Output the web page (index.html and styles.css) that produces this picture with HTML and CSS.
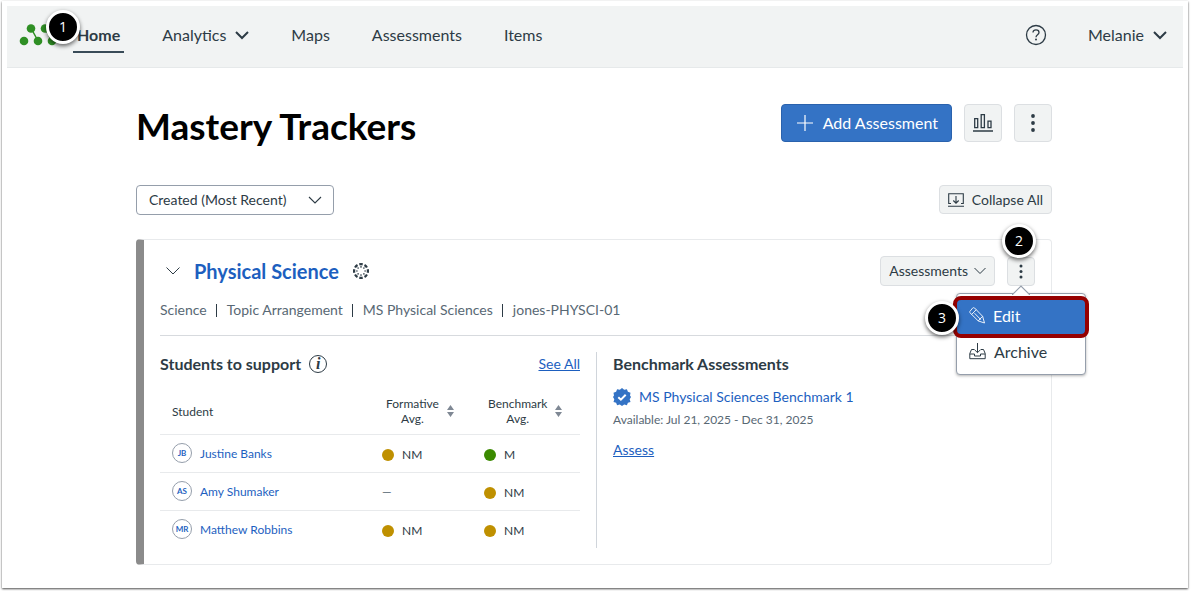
FILE: index.html
```html
<!DOCTYPE html>
<html lang="en">
<head>
    <meta charset="UTF-8">
    <meta name="viewport" content="width=device-width, initial-scale=1.0">
    <title>Mastery Trackers</title>
    <link rel="stylesheet" href="styles.css">
</head>
<body>

<div class="frame">
    <header class="topbar">
        <a href="#" class="brand" aria-label="Mastery">
            <svg width="52" height="24" viewBox="0 0 52 24">
                <path d="M12 5l7 13M26 5l7 13" stroke="#2f8f24" stroke-width="1.5" fill="none"/>
                <g fill="#2f8f24">
                    <circle cx="5" cy="18" r="4.300"/>
                    <circle cx="12" cy="5.500" r="4.300"/>
                    <circle cx="19" cy="18" r="4.300"/>
                    <circle cx="26" cy="5.500" r="4.300"/>
                    <circle cx="33" cy="18" r="4.300"/>
                </g>
            </svg>
            <span class="step step-home">1</span>
        </a>
        <nav class="nav">
            <a href="#" class="active">Home</a>
            <a href="#">Analytics
                <svg width="14" height="9" viewBox="0 0 14 9"><path d="M1 1l6 6 6-6" fill="none" stroke="currentColor" stroke-width="2"/></svg>
            </a>
            <a href="#">Maps</a>
            <a href="#">Assessments</a>
            <a href="#">Items</a>
        </nav>
        <div class="account">
            <button type="button" class="plain" aria-label="Help">
                <svg width="22" height="22" viewBox="0 0 22 22" fill="none" stroke="currentColor">
                    <circle cx="11" cy="11" r="9.500" stroke-width="1.300"/>
                    <path d="M8 8.600C8 6.900 9.300 5.800 11 5.800s3 1.100 3 2.600c0 2.300-3 2.300-3 4.800" stroke-width="1.300"/>
                    <circle cx="11" cy="15.600" r="1" fill="currentColor" stroke="none"/>
                </svg>
            </button>
            <button type="button" class="plain user">Melanie
                <svg width="14" height="9" viewBox="0 0 14 9"><path d="M1 1l6 6 6-6" fill="none" stroke="currentColor" stroke-width="2"/></svg>
            </button>
        </div>
    </header>

    <main class="content">
        <div class="row page-head">
            <h1>Mastery Trackers</h1>
            <div class="actions">
                <button type="button" class="btn btn-primary">
                    <svg width="16" height="16" viewBox="0 0 16 16"><path d="M8 0v16M0 8h16" stroke="currentColor" stroke-width="1.200"/></svg>
                    Add Assessment
                </button>
                <button type="button" class="btn btn-square" aria-label="Reports">
                    <svg width="20" height="20" viewBox="0 0 20 20" fill="none" stroke="currentColor">
                        <path d="M1.700 5.700h3v9h-3zM8.200 1.700h3.200v13H8.200zM15 8.200h3v6.500h-3z" stroke-width="1.300"/>
                        <path d="M0 18h20" stroke-width="1.500"/>
                    </svg>
                </button>
                <button type="button" class="btn btn-square" aria-label="More options">
                    <svg width="4" height="18" viewBox="0 0 4 18" fill="currentColor"><circle cx="2" cy="2" r="1.900"/><circle cx="2" cy="9" r="1.900"/><circle cx="2" cy="16" r="1.900"/></svg>
                </button>
            </div>
        </div>

        <div class="row filters">
            <div class="sort-select">
                <select id="sortBy" aria-label="Sort by">
                    <option>Created (Most Recent)</option>
                </select>
                <svg width="14" height="8" viewBox="0 0 14 8"><path d="M1 1l6 6 6-6" fill="none" stroke="currentColor" stroke-width="1.100"/></svg>
            </div>
            <button type="button" class="btn">
                <svg width="16" height="14" viewBox="0 0 16 14" fill="none" stroke="currentColor" stroke-width="1.100">
                    <path d="M3 10.500H.7V.7h14.600v9.800H13M0 13.300h16M8 3v7M5.300 7.500L8 10.200l2.700-2.700"/>
                </svg>
                Collapse All
            </button>
        </div>

        <section class="card">
            <div class="row card-head">
                <button type="button" class="plain toggle" aria-label="Collapse">
                    <svg width="14" height="8" viewBox="0 0 14 8"><path d="M.5.500l6.500 6.500L13.500.500" fill="none" stroke="currentColor" stroke-width="1"/></svg>
                </button>
                <h2><a href="#">Physical Science</a></h2>
                <svg class="canvas-icon" width="16" height="16" viewBox="0 0 16 16" fill="none" stroke="currentColor">
                    <circle cx="8" cy="8" r="6.900" stroke-width="2.200" pathLength="80" stroke-dasharray="6.500 3.500" stroke-dashoffset="3.250"/>
                    <g fill="currentColor" stroke="none">
                        <circle cx="8" cy="3.900" r=".8"/><circle cx="10.900" cy="5.100" r=".8"/><circle cx="12.100" cy="8" r=".8"/><circle cx="10.900" cy="10.900" r=".8"/>
                        <circle cx="8" cy="12.100" r=".8"/><circle cx="5.100" cy="10.900" r=".8"/><circle cx="3.900" cy="8" r=".8"/><circle cx="5.100" cy="5.100" r=".8"/>
                    </g>
                </svg>
                <div class="card-actions">
                    <button type="button" class="btn btn-drop">Assessments
                        <svg width="12" height="8" viewBox="0 0 12 8"><path d="M.5 1L6 6.500 11.500 1" fill="none" stroke="currentColor" stroke-width="1"/></svg>
                    </button>
                    <div class="more">
                        <button type="button" class="btn btn-more" aria-label="Tracker options">
                            <svg width="4" height="15" viewBox="0 0 4 15" fill="currentColor"><circle cx="2" cy="2" r="1.500"/><circle cx="2" cy="7.500" r="1.500"/><circle cx="2" cy="13" r="1.500"/></svg>
                        </button>
                        <span class="step step-more">2</span>
                        <div class="menu">
                            <svg class="menu-arrow" width="18" height="10" viewBox="0 0 18 10"><path d="M0 10L9 1l9 9" fill="#fff" stroke="#959eab" stroke-width="1.200"/></svg>
                            <button type="button" class="selected">
                                <svg width="16" height="17" viewBox="0 0 16 17" fill="none" stroke="currentColor" stroke-width=".9">
                                    <path d="M1 4.300L3.600 1.100c.6-.6 1.300-.6 2-.1l8 8.300 1.900 6.700-6.300-2.100L1 5.800c-.5-.5-.5-1 0-1.500zM2.600 7.500l4.600-4.800M9.200 13.900l4.400-4.600M5.500 6.200l6.300 6.500"/>
                                </svg>
                                Edit
                            </button>
                            <button type="button">
                                <svg width="17" height="17" viewBox="0 0 17 17" fill="none" stroke="currentColor" stroke-width="1">
                                    <path d="M5 6.500H2.500L.8 10.500v5.200h15.400v-5.200L14.500 6.500H12M.8 11h4.700v2h6v-2h4.700M8.500 0v9.500M5.300 6.500l3.200 3.200 3.200-3.200"/>
                                </svg>
                                Archive
                            </button>
                            <span class="callout"></span>
                            <span class="step step-edit">3</span>
                        </div>
                    </div>
                </div>
            </div>

            <ul class="meta">
                <li>Science</li>
                <li>Topic Arrangement</li>
                <li>MS Physical Sciences</li>
                <li>jones-PHYSCI-01</li>
            </ul>

            <div class="columns">
                <section class="students">
                    <div class="section-head">
                        <h3>Students to support</h3>
                        <button type="button" class="plain info" aria-label="About students to support">i</button>
                        <a href="#" class="underlined">See All</a>
                    </div>
                    <table>
                        <thead>
                            <tr>
                                <th class="col-student">Student</th>
                                <th class="col-formative">
                                    <button type="button" class="plain sort"><span>Formative<br>Avg.</span>
                                        <svg width="7" height="12" viewBox="0 0 7 12" fill="#7f8894"><path d="M0 5l3.500-5L7 5zM0 7l3.500 5L7 7z"/></svg>
                                    </button>
                                </th>
                                <th>
                                    <button type="button" class="plain sort"><span>Benchmark<br>Avg.</span>
                                        <svg width="7" height="12" viewBox="0 0 7 12" fill="#7f8894"><path d="M0 5l3.500-5L7 5zM0 7l3.500 5L7 7z"/></svg>
                                    </button>
                                </th>
                            </tr>
                        </thead>
                        <tbody>
                            <tr>
                                <td><a href="#" class="student"><span class="avatar">JB</span>Justine Banks</a></td>
                                <td><span class="score near">NM</span></td>
                                <td><span class="score mastered">M</span></td>
                            </tr>
                            <tr>
                                <td><a href="#" class="student"><span class="avatar">AS</span>Amy Shumaker</a></td>
                                <td><span class="no-score">—</span></td>
                                <td><span class="score near">NM</span></td>
                            </tr>
                            <tr>
                                <td><a href="#" class="student"><span class="avatar">MR</span>Matthew Robbins</a></td>
                                <td><span class="score near">NM</span></td>
                                <td><span class="score near">NM</span></td>
                            </tr>
                        </tbody>
                    </table>
                </section>

                <section class="benchmarks">
                    <h3>Benchmark Assessments</h3>
                    <a href="#" class="benchmark">
                        <svg width="18" height="18" viewBox="0 0 18 18">
                            <path d="M9 0l2.200 1.700 2.700-.5 1 2.600 2.600 1-.5 2.600L18 9l-1.300 2.200.8 2.700-2.600.8-1 2.600-2.700-.8L9 18l-2.200-1.500-2.700.8-1-2.600-2.600-.8.8-2.700L0 9l1-1.600-.5-2.600 2.600-1 1-2.600 2.700.5z" fill="#3473c5"/>
                            <path d="M5.300 9.200l2.600 2.500 4.800-5" fill="none" stroke="#fff" stroke-width="2"/>
                        </svg>
                        MS Physical Sciences Benchmark 1
                    </a>
                    <p>Available: Jul 21, 2025 - Dec 31, 2025</p>
                    <a href="#" class="underlined">Assess</a>
                </section>
            </div>
        </section>
    </main>
</div>

</body>
</html>
```
FILE: styles.css
```css
* {
    box-sizing: border-box;
}

body {
    font-family: Lato, 'Liberation Sans', sans-serif;
    font-size: 14px;
    line-height: 20px;
    margin: 0;
    padding: 1px 3px 3px 2px;
    min-height: 100vh;
    display: flex;
    background-color: #fff;
    color: #2d3b45;
}

h1, h2, h3, p, ul {
    margin: 0;
    padding: 0;
}

svg {
    flex: none;
    display: block;
}

a {
    color: #1d5fbf;
    text-decoration: none;
}

button, select {
    font: inherit;
    color: inherit;
}

button {
    cursor: pointer;
}

.frame {
    flex: 1;
    padding: 5px;
    background-color: #fff;
    box-shadow: 0 1px 2px rgba(0, 0, 0, 0.7);
}

/* Top navigation */
.topbar {
    display: flex;
    align-items: center;
    height: 62px;
    padding: 0 16px 3px 12px;
    background-color: #f1f3f3;
    border-bottom: 1px solid #e6e9ea;
    font-size: 16px;
}

.brand {
    position: relative;
    width: 54px;
}

.nav {
    display: flex;
    gap: 34px;
}

.nav a {
    display: flex;
    align-items: center;
    gap: 9px;
    padding: 6px 4px;
    color: #2d3b45;
    border-bottom: 2px solid transparent;
    border-top: 2px solid transparent;
}

.nav .active {
    font-weight: bold;
    border-bottom-color: #394b58;
}

.account {
    display: flex;
    align-items: center;
    gap: 41px;
    margin-left: auto;
}

.plain {
    display: flex;
    align-items: center;
    padding: 0;
    border: none;
    background: none;
}

.user {
    gap: 9px;
}

/* Page heading and filters */
.content {
    padding: 36px 131px 12px 129px;
}

.row {
    display: flex;
    align-items: center;
    justify-content: space-between;
}

h1 {
    padding-top: 6px;
    font-size: 37px;
    line-height: 40px;
    color: #000;
}

.page-head {
    height: 38px;
    margin-bottom: 43px;
}

.actions {
    display: flex;
    gap: 12px;
}

.btn {
    display: flex;
    align-items: center;
    justify-content: center;
    gap: 8px;
    height: 29px;
    padding: 0 8px;
    background-color: #f1f3f3;
    border: 1px solid #dcdfe2;
    border-radius: 4px;
}

.btn-primary {
    height: 38px;
    gap: 10px;
    padding: 0 13px 0 15px;
    background-color: #3473c5;
    border-color: #2a62ad;
    color: #fff;
    font-size: 16px;
}

.btn-square {
    width: 38px;
    height: 38px;
}

.filters {
    align-items: flex-start;
    margin-bottom: 24px;
}

.sort-select {
    display: grid;
    width: 198px;
    align-items: center;
}

.sort-select select, .sort-select svg {
    grid-area: 1 / 1;
}

.sort-select select {
    height: 30px;
    padding: 0 12px;
    appearance: none;
    background-color: #fff;
    border: 1px solid #959eab;
    border-radius: 4px;
}

.sort-select svg {
    justify-self: end;
    margin-right: 12px;
    pointer-events: none;
}

/* Tracker card */
.card {
    padding: 15px 16px 16px;
    border: 1px solid #e8eaec;
    border-left: 8px solid #8b8b8b;
    border-radius: 4px;
}

.card-head {
    height: 32px;
    margin-bottom: 13px;
}

.toggle {
    padding: 6px;
}

h2 {
    margin: 0 14px 0 8px;
    font-size: 20px;
}

.card-actions {
    display: flex;
    align-items: center;
    gap: 12px;
    margin-left: auto;
}

.btn-drop {
    height: 30px;
    gap: 6px;
}

.more {
    position: relative;
}

.btn-more {
    width: 28px;
}

.meta {
    display: flex;
    list-style: none;
    padding-bottom: 15px;
    margin-bottom: 16px;
    border-bottom: 1px solid #d7dade;
    color: #586874;
}

.meta li {
    display: flex;
    align-items: center;
}

.meta li + li::before {
    content: "";
    width: 1px;
    height: 13px;
    margin: 0 10px 0 9px;
    background-color: #2d3b45;
}

/* Options menu */
.menu {
    position: absolute;
    top: 36px;
    left: 50%;
    width: 130px;
    margin-left: -65px;
    padding: 4px 0;
    background-color: #fff;
    border: 1px solid #959eab;
    border-radius: 4px;
    box-shadow: 0 1px 3px rgba(0, 0, 0, 0.3);
}

.menu button {
    display: flex;
    align-items: center;
    gap: 8px;
    width: 100%;
    height: 36px;
    padding: 0 12px;
    border: none;
    background: none;
    font-size: 16px;
}

.menu .selected {
    background-color: #3473c5;
    color: #fff;
}

.menu-arrow {
    position: absolute;
    top: -9px;
    left: 55px;
}

.callout {
    position: absolute;
    top: 2px;
    left: -4px;
    right: -4px;
    height: 42px;
    border: 4px solid #960000;
    border-radius: 8px;
}

/* Numbered step markers */
.step {
    position: absolute;
    width: 34px;
    height: 34px;
    border: 3px solid #fff;
    border-radius: 50%;
    background-color: #000;
    box-shadow: 0 2px 4px rgba(0, 0, 0, 0.6);
    color: #fff;
    font-family: 'Open Sans', sans-serif;
    font-size: 14px;
    font-weight: normal;
    line-height: 27px;
    text-align: center;
}

.step-home {
    top: -13px;
    left: 27px;
}

.step-more {
    top: -33px;
    left: -5px;
}

.step-edit {
    top: 7px;
    left: -32px;
}

/* Card columns */
.columns {
    display: flex;
}

.students {
    flex: 0 1 437px;
    padding: 2px 16px 0 0;
    border-right: 1px solid #d0d5db;
}

.section-head {
    display: flex;
    align-items: center;
    margin-bottom: 15px;
}

h3 {
    font-size: 16px;
    line-height: 20px;
}

.info {
    justify-content: center;
    width: 18px;
    height: 18px;
    margin-left: 8px;
    border: 1px solid #2d3b45;
    border-radius: 50%;
    font: italic bold 16px 'Liberation Serif', serif;
}

.underlined {
    text-decoration: underline;
}

.section-head .underlined {
    margin-left: auto;
}

table {
    width: 100%;
    table-layout: fixed;
    border-collapse: collapse;
    font-size: 12px;
    line-height: 15px;
}

th {
    height: 45px;
    padding: 0 0 0 16px;
    font-weight: normal;
    text-align: left;
}

.col-student {
    width: 210px;
    padding-left: 12px;
}

.col-formative {
    width: 102px;
}

.sort {
    gap: 8px;
    text-align: center;
}

td {
    height: 38px;
    padding: 0 12px;
    border-top: 1px solid #e8eaec;
}

.student, .score {
    display: flex;
    align-items: center;
    gap: 8px;
}

.avatar {
    width: 20px;
    height: 20px;
    border: 1px solid #959eab;
    border-radius: 50%;
    font-size: 8px;
    font-weight: bold;
    line-height: 18px;
    text-align: center;
}

.score {
    padding-top: 3px;
}

.score::before {
    content: "";
    width: 12px;
    height: 12px;
    border-radius: 50%;
}

.near::before {
    background-color: #bf9000;
}

.mastered::before {
    background-color: #3b8a00;
}

.no-score {
    color: #586874;
}

.benchmarks {
    flex: 1;
    padding: 2px 0 0 16px;
}

.benchmark {
    display: flex;
    align-items: center;
    gap: 8px;
    margin-top: 13px;
}

.benchmarks p {
    margin: 3px 0 10px;
    color: #586874;
    font-size: 12px;
}
```
